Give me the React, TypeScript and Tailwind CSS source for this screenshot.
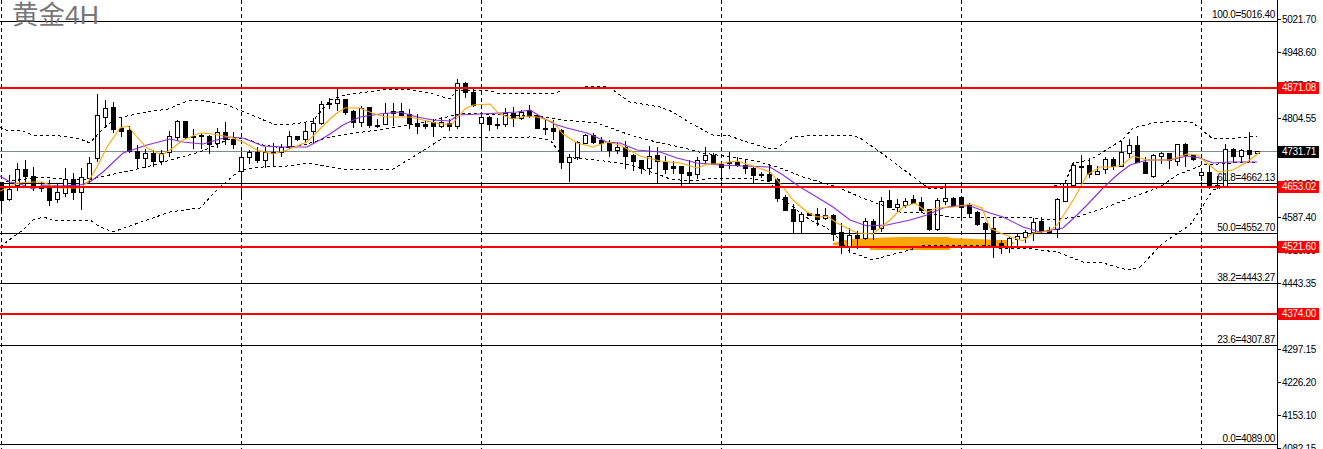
// high, body top, body bottom, low, white body (1) or black body (0)
type Candle = [number, number, number, number, number];

const candles: Candle[] = [
	[182, 182, 200, 212, 0], [175, 189, 199, 200, 1], [163, 169, 185, 190, 1], [160, 169, 176, 185, 0],
	[167, 176, 187, 190, 0], [182, 186, 188, 191, 0], [180, 187, 200, 205, 0], [183, 192, 199, 202, 1],
	[168, 179, 193, 196, 1], [173, 179, 192, 199, 0], [168, 177, 192, 209, 1], [157, 163, 178, 182, 1],
	[94, 115, 158, 161, 1], [100, 108, 117, 125, 1], [102, 107, 129, 132, 0], [117, 128, 131, 136, 0],
	[126, 130, 151, 152, 0], [145, 151, 158, 167, 0], [149, 153, 158, 167, 1], [150, 153, 161, 166, 0],
	[150, 153, 161, 164, 1], [131, 136, 152, 156, 1], [120, 121, 137, 140, 1], [121, 121, 137, 138, 0],
	[129, 136, 136, 148, 1], [133, 135, 135, 148, 1], [135, 136, 144, 153, 0], [128, 132, 143, 147, 1],
	[122, 132, 139, 144, 0], [132, 139, 144, 148, 0], [152, 157, 171, 195, 1], [150, 152, 157, 163, 1],
	[147, 152, 160, 162, 0], [147, 152, 160, 167, 1], [143, 152, 153, 166, 0], [144, 147, 152, 156, 1],
	[131, 136, 146, 148, 1], [136, 136, 139, 140, 0], [122, 131, 139, 142, 1], [118, 123, 131, 143, 1],
	[101, 104, 123, 124, 1], [98, 103, 103, 108, 1], [89, 99, 103, 110, 1], [99, 99, 112, 114, 0],
	[110, 111, 122, 127, 0], [106, 108, 122, 126, 1], [107, 107, 125, 127, 0], [119, 125, 125, 127, 0],
	[103, 113, 124, 124, 1], [103, 111, 113, 125, 0], [103, 111, 115, 115, 0], [109, 114, 123, 128, 0],
	[114, 123, 126, 133, 0], [121, 124, 126, 128, 0], [119, 122, 126, 136, 0], [117, 122, 126, 127, 1],
	[119, 123, 126, 130, 0], [79, 83, 126, 128, 1], [82, 83, 92, 97, 0], [88, 92, 105, 106, 0],
	[113, 117, 123, 150, 1], [116, 117, 124, 130, 0], [118, 124, 124, 128, 0], [108, 113, 124, 126, 1],
	[107, 113, 118, 126, 0], [110, 112, 118, 119, 1], [105, 110, 116, 117, 0], [115, 116, 128, 128, 0],
	[120, 128, 129, 134, 0], [120, 128, 131, 139, 0], [129, 130, 162, 168, 0], [154, 157, 162, 181, 1],
	[141, 142, 157, 159, 1], [134, 135, 143, 143, 1], [133, 135, 142, 143, 0], [137, 140, 143, 150, 0],
	[140, 143, 150, 156, 0], [143, 147, 150, 153, 1], [141, 147, 156, 168, 0], [154, 155, 161, 170, 0],
	[160, 160, 168, 173, 0], [146, 156, 168, 174, 1], [147, 155, 161, 183, 0], [156, 162, 169, 173, 0],
	[161, 166, 168, 173, 0], [166, 166, 173, 186, 0], [160, 172, 175, 182, 0], [157, 160, 174, 178, 1],
	[147, 155, 160, 163, 1], [153, 155, 163, 163, 0], [161, 164, 167, 180, 0], [152, 162, 163, 168, 0],
	[157, 162, 165, 166, 0], [160, 165, 168, 173, 0], [167, 168, 175, 182, 0], [172, 174, 174, 177, 0],
	[165, 174, 180, 180, 0], [178, 179, 198, 201, 0], [195, 197, 210, 210, 0], [204, 209, 221, 233, 0],
	[212, 214, 221, 232, 1], [213, 213, 215, 215, 0], [208, 214, 219, 225, 0], [208, 215, 218, 219, 1],
	[214, 215, 234, 240, 0], [223, 232, 247, 253, 0], [228, 235, 247, 252, 1], [231, 235, 238, 248, 0],
	[218, 221, 238, 239, 1], [219, 221, 229, 239, 0], [197, 201, 228, 231, 1], [190, 200, 207, 207, 0],
	[199, 204, 207, 212, 1], [198, 201, 205, 207, 1], [195, 199, 203, 203, 0], [197, 202, 210, 212, 0],
	[209, 209, 229, 230, 0], [198, 200, 229, 230, 1], [184, 198, 201, 204, 1], [197, 198, 206, 206, 0],
	[197, 197, 207, 216, 0], [203, 205, 213, 216, 0], [211, 212, 224, 225, 0], [222, 223, 229, 246, 0],
	[218, 228, 247, 257, 0], [240, 243, 247, 253, 0], [237, 238, 247, 252, 1], [233, 236, 239, 245, 1],
	[230, 232, 237, 242, 1], [218, 222, 232, 240, 1], [217, 221, 231, 232, 0], [227, 230, 232, 232, 0],
	[198, 199, 229, 237, 1], [182, 183, 201, 201, 1], [162, 165, 185, 185, 1], [155, 166, 166, 185, 0],
	[158, 165, 174, 177, 0], [166, 171, 174, 174, 1], [157, 159, 169, 173, 1], [157, 159, 166, 169, 0],
	[141, 152, 166, 166, 1], [139, 145, 153, 157, 1], [136, 145, 162, 162, 0], [157, 162, 173, 173, 0],
	[154, 155, 176, 177, 1], [152, 153, 156, 163, 1], [153, 153, 160, 168, 0], [144, 144, 161, 165, 1],
	[143, 144, 155, 166, 0], [155, 155, 159, 160, 0], [168, 172, 175, 180, 1], [165, 172, 187, 188, 0],
	[176, 185, 187, 188, 0], [144, 149, 186, 186, 1], [148, 149, 156, 162, 0], [149, 150, 156, 162, 1],
	[132, 150, 154, 161, 0], [151, 151, 153, 153, 1],
];

const fastMa =
	"0,191 17,183 33,182 42,182 50,185 60,188 80,188 88,182 97,167 107,147 120,128 128,126 137,137 147,148 162,155 170,150 183,140 200,133 213,134 230,137 243,142 257,150 273,154 287,150 307,142 317,132 330,119 337,113 345,108 360,108 372,113 385,117 397,117 410,117 427,121 440,124 452,124 458,117 465,109 473,105 490,104 498,113 512,119 527,116 537,117 553,122 563,134 577,143 593,147 607,142 620,145 640,156 660,161 670,162 680,163 697,168 705,165 722,163 737,161 750,165 770,172 783,187 793,200 807,212 817,217 827,216 837,223 857,233 873,234 880,228 890,220 903,207 915,203 927,212 937,208 953,207 970,204 982,208 990,228 1000,233 1023,241 1033,233 1050,231 1057,225 1067,210 1075,197 1087,175 1100,167 1113,167 1122,165 1133,156 1147,160 1170,160 1187,154 1197,155 1207,163 1218,172 1233,170 1247,162 1260,152";
const slowMa =
	"0,176 10,182 20,184 33,189 43,185 60,186 80,185 90,182 103,172 123,153 147,145 170,139 183,142 203,144 227,137 243,138 263,146 283,147 307,147 320,140 330,134 343,125 360,117 380,114 400,112 417,117 433,120 450,121 458,115 480,114 500,113 517,112 530,110 543,118 557,125 567,128 587,133 607,142 620,143 637,150 660,152 677,158 697,163 720,165 743,166 770,167 783,175 800,187 820,199 833,207 850,220 867,226 887,225 910,220 927,215 943,208 953,206 970,206 990,213 1003,217 1023,227 1040,232 1063,228 1077,215 1087,205 1103,188 1117,175 1130,165 1147,160 1170,160 1187,156 1200,158 1213,163 1230,162 1243,162 1257,162";
const upperBand =
	"0,127 8,131 20,130 33,135 60,136 80,139 90,143 100,132 113,120 122,117 147,112 168,109 187,101 200,100 227,105 247,113 273,124 293,124 313,121 330,100 345,95 360,93 390,89 413,90 430,93 450,99 457,90 487,90 497,93 557,93 563,88 607,86 613,90 630,102 660,107 673,112 690,123 713,135 727,135 747,142 767,148 777,148 793,137 820,135 850,135 860,138 880,152 900,167 920,182 930,189 945,188 980,186 1025,186 1050,187 1065,183 1073,163 1090,160 1103,152 1122,140 1133,128 1153,123 1180,121 1193,123 1202,130 1213,139 1237,138 1257,136";
const midBand =
	"0,183 37,177 63,179 87,180 123,172 147,167 170,160 200,152 227,140 243,138 263,145 283,148 307,144 320,140 330,137 363,132 397,127 427,122 463,113 503,115 530,115 563,120 597,123 630,135 660,143 680,147 703,153 737,158 760,162 780,168 803,177 820,182 837,187 860,197 887,207 900,212 923,213 950,217 990,217 1033,218 1047,220 1077,217 1107,207 1133,197 1160,187 1177,175 1203,165 1233,163 1257,162";
const lowerBand =
	"0,247 13,237 23,230 33,220 43,217 57,221 90,220 100,227 113,232 127,227 147,220 170,212 200,208 217,190 240,170 263,167 287,166 310,163 330,167 350,170 393,169 413,157 443,138 530,137 550,140 563,157 597,160 630,165 660,175 670,179 690,181 717,178 750,178 770,182 780,197 810,220 827,228 840,240 850,252 873,260 890,255 910,250 923,245 990,245 1000,249 1023,248 1057,252 1083,262 1103,263 1127,270 1140,267 1163,243 1190,225 1202,207 1213,190 1223,187";

const blackLines = [21.5, 183.5, 233.5, 283.5, 345.5, 444.5];
const redLines = [88, 187, 247, 314];
const dashedColumns = [1.5, 241.5, 481.5, 721.5, 961.5, 1201.5];

const fibLabels = [
	{ text: "100.0=5016.40", y: 18 },
	{ text: "61.8=4662.13", y: 181 },
	{ text: "50.0=4552.70", y: 231 },
	{ text: "38.2=4443.27", y: 281 },
	{ text: "23.6=4307.87", y: 343 },
	{ text: "0.0=4089.00", y: 442 },
];

const axisPrices = [
	"5021.70", "4948.60", "4877.65", "4804.55", "4731.70", "4660.50", "4587.40",
	"4516.50", "4443.35", "4370.25", "4297.15", "4226.20", "4153.10", "4082.15",
];

const priceTags = [
	{ text: "4871.08", y: 82, bg: "bg-[#ff0000]" },
	{ text: "4731.71", y: 146, bg: "bg-black" },
	{ text: "4653.02", y: 181, bg: "bg-[#ff0000]" },
	{ text: "4521.60", y: 241, bg: "bg-[#ff0000]" },
	{ text: "4374.00", y: 308, bg: "bg-[#ff0000]" },
];

const CandleMark = ({ candle, x }: { candle: Candle; x: number }) => {
	const [high, top, bottom, low, white] = candle;
	return (
		<g shapeRendering="crispEdges" stroke="#000" strokeWidth={1}>
			<line x1={x + 0.5} x2={x + 0.5} y1={high} y2={low + 1} />
			<rect
				x={x - 1.5}
				y={top + 0.5}
				width={4}
				height={Math.max(bottom - top, 1)}
				fill={white ? "#fff" : "#000"}
			/>
		</g>
	);
};

const Chart = () => (
	<svg width={1277} height={449} className="block">
		<g shapeRendering="crispEdges" stroke="#000" strokeWidth={1}>
			{dashedColumns.map((x) => (
				<line key={x} x1={x} x2={x} y1={0} y2={449} strokeDasharray="4 3" />
			))}
			<line x1={0} x2={1277} y1={151.5} y2={151.5} stroke="#7f8c8d" />
			{blackLines.map((y) => (
				<line key={y} x1={0} x2={1277} y1={y} y2={y} />
			))}
		</g>
		<polygon
			points="833,243 850,239 870,238 900,237 949,237 950,238 1000,240 1007,240 1015,243 1007,247 950,247 950,250 870,250 870,248 833,245"
			fill="#ffa500"
		/>
		{candles.map((candle, i) => (
			<CandleMark key={i} candle={candle} x={1 + 8 * i} />
		))}
		<g fill="none" stroke="#000" strokeWidth={1} strokeDasharray="3 3" shapeRendering="crispEdges">
			<polyline points={upperBand} />
			<polyline points={midBand} />
			<polyline points={lowerBand} />
		</g>
		<polyline points={slowMa} fill="none" stroke="#8a2be2" strokeWidth={1.1} />
		<polyline points={fastMa} fill="none" stroke="#ffa500" strokeWidth={1.1} />
		{redLines.map((y) => (
			<rect key={y} x={0} y={y - 1} width={1277} height={2} fill="#ff0000" />
		))}
		{fibLabels.map((label) => (
			<text key={label.text} x={1275} y={label.y} textAnchor="end" fontSize={10} letterSpacing={-0.3} fill="#000">
				{label.text}
			</text>
		))}
	</svg>
);

const PriceAxis = () => (
	<div className="relative flex-1 overflow-hidden border-l border-black pt-[3px]">
		{axisPrices.map((price) => (
			<div key={price} className="flex h-[33px] items-center gap-px text-[10px] leading-none tracking-[-0.3px] text-black">
				<span className="h-px w-[3px] bg-black" />
				<span>{price}</span>
			</div>
		))}
		{priceTags.map((tag) => (
			<div
				key={tag.text}
				className={`absolute left-0 flex h-[12px] w-[41px] items-center pl-[4px] text-[10px] leading-none tracking-[-0.3px] text-white ${tag.bg}`}
				style={{ top: tag.y }}
			>
				{tag.text}
			</div>
		))}
	</div>
);

export default function App() {
	return (
		<div className="flex h-[449px] w-[1323px] overflow-hidden bg-white [font-family:'Liberation_Sans','Noto_Sans_CJK_SC',sans-serif]">
			<div className="relative h-full w-[1277px]">
				<Chart />
				<div className="absolute left-[12px] top-0 text-[26.5px] leading-[30px] text-[#777777]">黄金4H</div>
			</div>
			<PriceAxis />
		</div>
	);
}
